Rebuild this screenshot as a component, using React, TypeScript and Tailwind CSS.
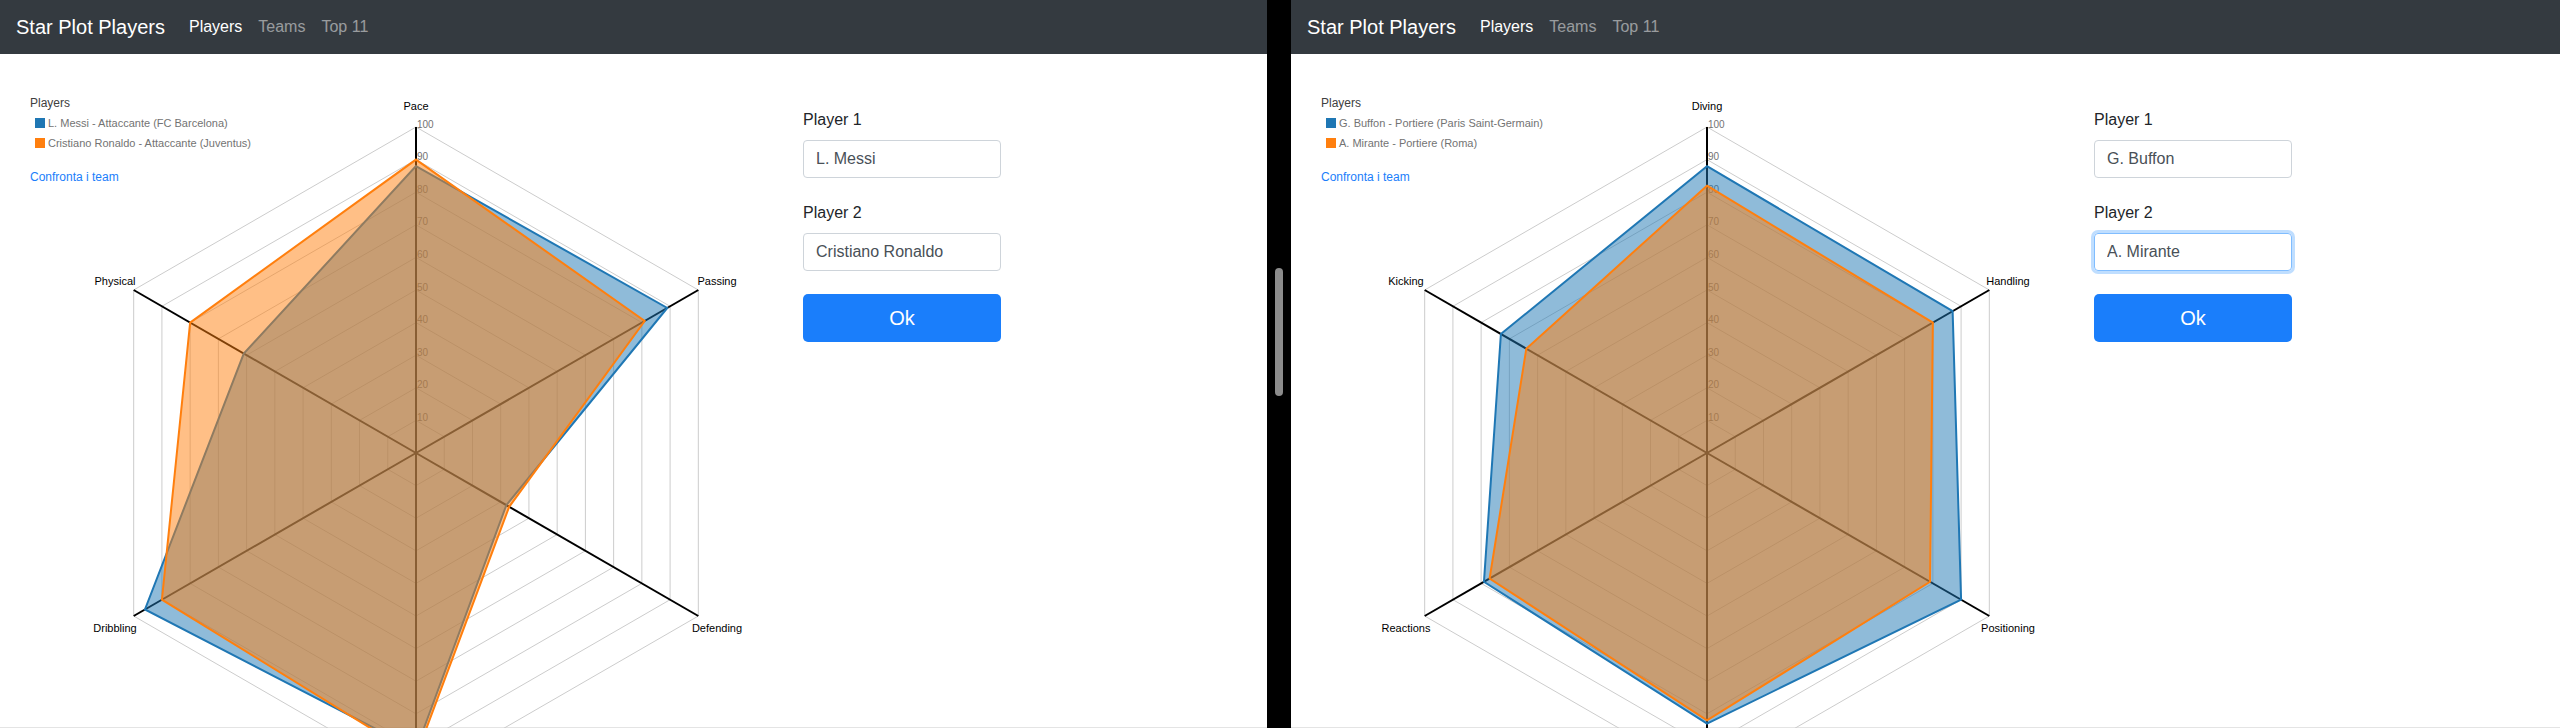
import React from 'react'

type Series = { label: string; color: string; values: number[] }

type PaneData = {
  axes: string[]
  series: Series[]
  player1: string
  player2: string
  focusSecond?: boolean
}

const panes: PaneData[] = [
  {
    axes: ['Pace', 'Passing', 'Defending', 'Shooting', 'Dribbling', 'Physical'],
    series: [
      { label: 'L. Messi - Attaccante (FC Barcelona)', color: '#1f77b4', values: [88, 89, 32, 91, 96, 61] },
      { label: 'Cristiano Ronaldo - Attaccante (Juventus)', color: '#ff7f0e', values: [90, 81, 33, 93, 90, 80] },
    ],
    player1: 'L. Messi',
    player2: 'Cristiano Ronaldo',
  },
  {
    axes: ['Diving', 'Handling', 'Positioning', 'Reflexes', 'Reactions', 'Kicking'],
    series: [
      { label: 'G. Buffon - Portiere (Paris Saint-Germain)', color: '#1f77b4', values: [88, 87, 90, 83, 79, 73] },
      { label: 'A. Mirante - Portiere (Roma)', color: '#ff7f0e', values: [82, 80, 79, 82, 77, 64] },
    ],
    player1: 'G. Buffon',
    player2: 'A. Mirante',
    focusSecond: true,
  },
]

// chart geometry, in svg coords (svg starts right under the navbar)
const CX = 416
const CY = 399
const R = 326
const FONT = "'Liberation Sans', Arial, sans-serif"

// where the axis names sit, relative to the centre (null = below the fold, not drawn)
const labelOffsets: ([number, number] | null)[] = [
  [0, -343],
  [301, -168],
  [301, 179],
  null,
  [-301, 179],
  [-301, -168],
]

function point(i: number, total: number, v: number) {
  const a = (Math.PI * 2 * i) / total
  return [CX + R * v * Math.sin(a), CY - R * v * Math.cos(a)]
}

function ring(total: number, v: number) {
  return Array.from({ length: total }, (_, i) => point(i, total, v).join(',')).join(' ')
}

function StarPlot({ axes, series }: { axes: string[]; series: Series[] }) {
  const n = axes.length
  const levels = [1, 2, 3, 4, 5, 6, 7, 8, 9, 10]

  return (
    <svg width={803} height={674} style={{ fontFamily: FONT }}>
      {/* grid */}
      {levels.map((l) => (
        <polygon key={l} points={ring(n, l / 10)} fill="none" stroke="#cccccc" strokeWidth={1} />
      ))}

      {/* axes */}
      {axes.map((name, i) => {
        const [x, y] = point(i, n, 1)
        return <line key={name} x1={CX} y1={CY} x2={x} y2={y} stroke="#000" strokeWidth={2} />
      })}

      {/* level ticks */}
      {levels.map((l) => (
        <text key={l} x={CX + 1} y={CY - (R * l) / 10 + 0.5} fontSize={10} fill="#737373">
          {l * 10}
        </text>
      ))}

      {/* axis names */}
      {axes.map((name, i) => {
        const off = labelOffsets[i]
        if (!off) return null
        return (
          <text key={name} x={CX + off[0]} y={CY + off[1]} fontSize={11} textAnchor="middle" fill="#000">
            {name}
          </text>
        )
      })}

      {/* players */}
      {series.map((s) => (
        <polygon
          key={s.label}
          points={s.values.map((v, i) => point(i, n, v / 100).join(',')).join(' ')}
          fill={s.color}
          fillOpacity={0.5}
          stroke={s.color}
          strokeWidth={2}
        />
      ))}

      {/* legend */}
      <text x={30} y={53} fontSize={12} fill="#404040">
        Players
      </text>
      {series.map((s, i) => (
        <g key={s.label}>
          <rect x={35} y={64 + i * 20} width={10} height={10} fill={s.color} />
          <text x={48} y={73 + i * 20} fontSize={11} fill="#737373">
            {s.label}
          </text>
        </g>
      ))}
    </svg>
  )
}

function Pane({ data, className }: { data: PaneData; className: string }) {
  return (
    <div className={`flex flex-col bg-white border-b border-[#e4e4e4] ${className}`}>
      <nav className="flex h-[54px] shrink-0 items-center bg-[#343a40] px-4">
        <span className="mr-4 text-[20px] text-white">Star Plot Players</span>
        <a className="px-2 text-[16px] text-white">Players</a>
        <a className="px-2 text-[16px] text-white/50">Teams</a>
        <a className="px-2 text-[16px] text-white/50">Top 11</a>
      </nav>

      <div className="flex">
        <div className="relative w-[803px] shrink-0">
          <StarPlot axes={data.axes} series={data.series} />
          <a className="absolute left-[30px] top-[115px] text-[12px] leading-[16px] text-[#1a7efb]">
            Confronta i team
          </a>
        </div>

        <form className="w-[198px] pt-[54px]">
          <label className="mb-2 block text-[16px] leading-6 text-[#212529]">Player 1</label>
          <input
            defaultValue={data.player1}
            className="mb-[23px] block h-[38px] w-full rounded border border-[#ced4da] px-3 text-[16px] text-[#495057] outline-none"
          />
          <label className="mb-2 block text-[16px] leading-6 text-[#212529]">Player 2</label>
          {data.focusSecond ? (
            <input
              defaultValue={data.player2}
              className="mb-[23px] block h-[38px] w-full rounded border border-[#80bdff] px-3 text-[16px] text-[#495057] shadow-[0_0_0_3px_rgba(0,123,255,0.25)] outline-none"
            />
          ) : (
            <input
              defaultValue={data.player2}
              className="mb-[23px] block h-[38px] w-full rounded border border-[#ced4da] px-3 text-[16px] text-[#495057] outline-none"
            />
          )}
          <button
            type="button"
            className="block h-[48px] w-full rounded-[5px] bg-[#1a7efb] text-[20px] text-white"
          >
            Ok
          </button>
        </form>
      </div>
    </div>
  )
}

export default function App() {
  return (
    <div className="flex h-[728px] w-[2560px] overflow-hidden bg-black font-['Liberation_Sans',Arial,sans-serif]">
      <Pane data={panes[0]} className="w-[1267px] shrink-0" />

      {/* split view divider */}
      <div className="flex w-[24px] shrink-0 justify-center bg-black">
        <div className="mt-[268px] h-[128px] w-[8px] rounded-full bg-[#8c8c8c]" />
      </div>

      <Pane data={panes[1]} className="flex-1" />
    </div>
  )
}
